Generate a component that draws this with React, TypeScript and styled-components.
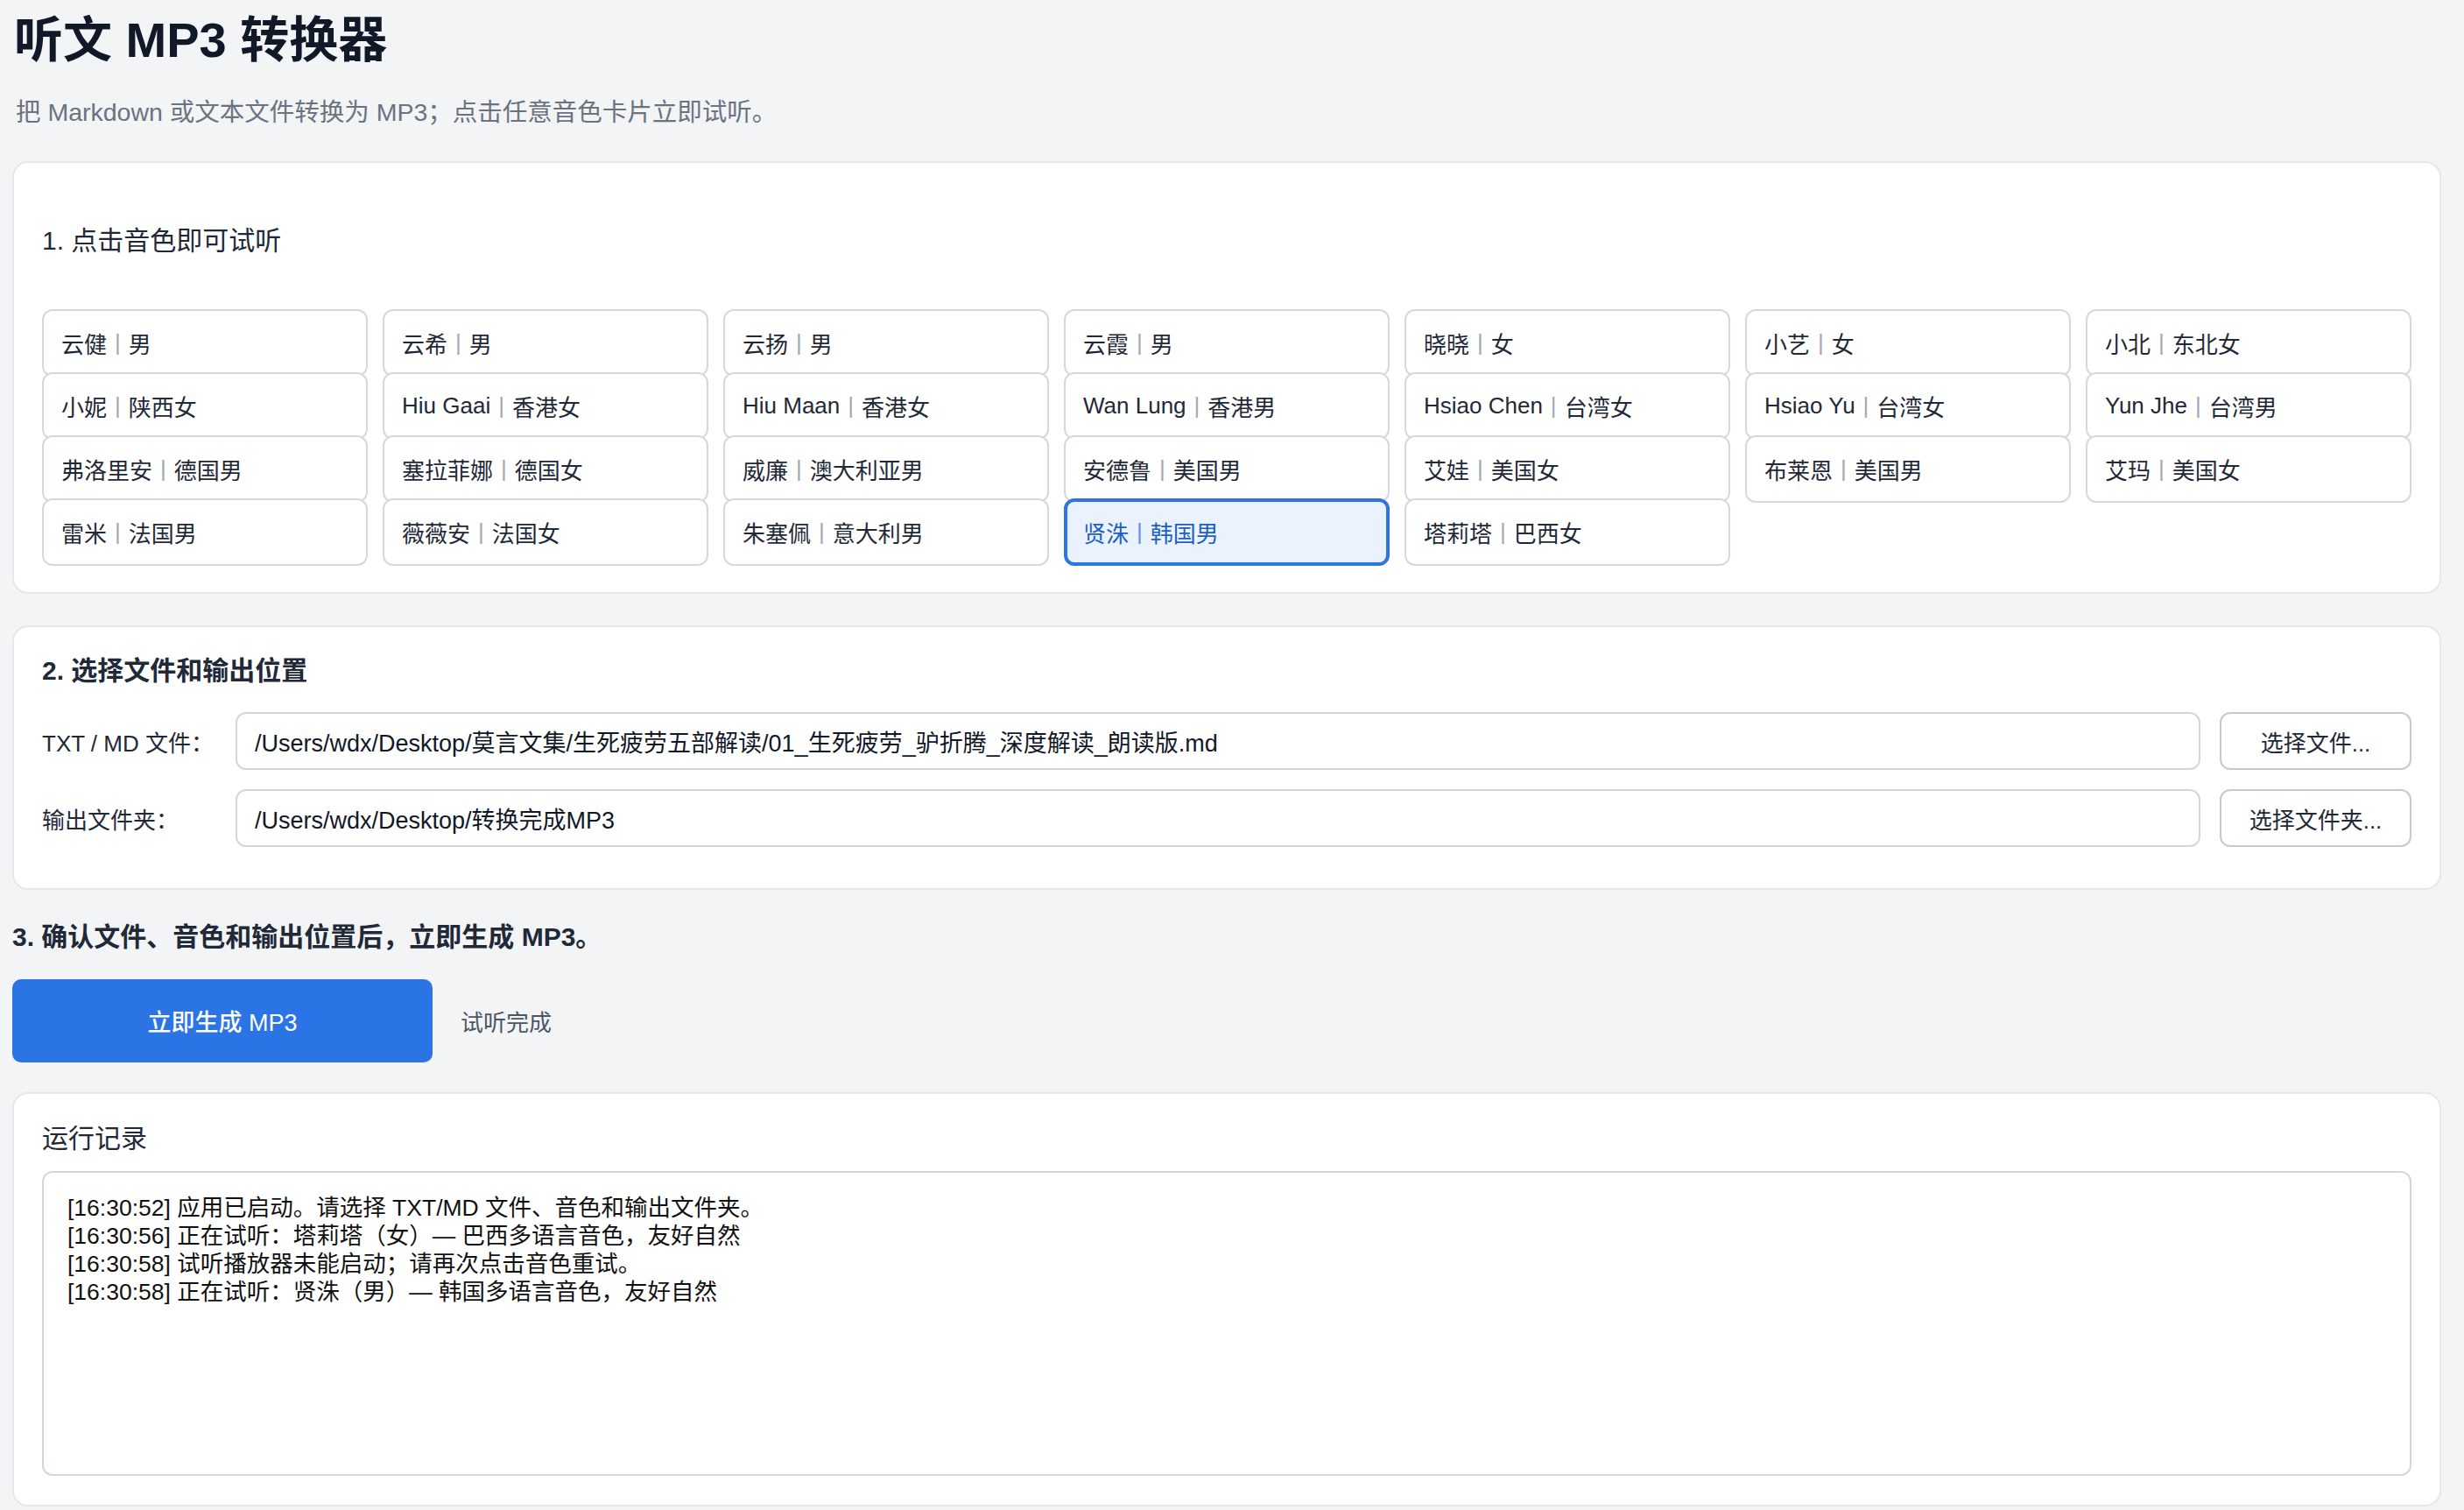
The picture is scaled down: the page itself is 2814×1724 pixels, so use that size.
import React, { useState } from "react";
import styled, { createGlobalStyle } from "styled-components";

const GlobalStyle = createGlobalStyle`
  html, body {
    margin: 0;
    padding: 0;
    background: #f3f4f6;
  }
  body {
    font-family: "Liberation Sans", "Noto Sans CJK SC", sans-serif;
    color: #1f2937;
  }
  * {
    box-sizing: border-box;
  }
`;

const Page = styled.div`
  padding: 12px 26px 0 14px;
`;

const Title = styled.h1`
  margin: 0;
  font-size: 56px;
  line-height: 67px;
  font-weight: 700;
  color: #111827;
  padding-left: 2px;
`;

const Subtitle = styled.p`
  margin: 28px 0 0 4px;
  font-size: 28.5px;
  line-height: 42px;
  color: #6b7280;
`;

const Card = styled.section<{ $pad: string; $top: number }>`
  margin-top: ${p => p.$top}px;
  background: #ffffff;
  border: 2px solid #e5e7eb;
  border-radius: 18px;
  padding: ${p => p.$pad};
`;

const Heading = styled.h2<{ $weight?: number }>`
  margin: 0;
  font-size: 30px;
  line-height: 42px;
  font-weight: ${p => p.$weight || 400};
  color: #1f2937;
`;

const VoiceGrid = styled.div`
  margin-top: 57px;
  display: grid;
  grid-template-columns: repeat(7, 1fr);
  column-gap: 17px;
  grid-auto-rows: 72px;
`;

const VoiceCard = styled.button<{ $active?: boolean }>`
  height: 77px;
  display: flex;
  align-items: center;
  text-align: left;
  font-family: inherit;
  font-size: 26px;
  cursor: pointer;
  border-radius: 12px;
  background: ${p => (p.$active ? "#eaf2fe" : "#ffffff")};
  border: ${p => (p.$active ? "4px solid #2f74e4" : "2px solid #d5d8de")};
  color: ${p => (p.$active ? "#1d5fc4" : "#1f2937")};
  padding: ${p => (p.$active ? "0 18px" : "0 20px")};
`;

const Bar = styled.span<{ $active?: boolean }>`
  color: ${p => (p.$active ? "#5b8fe0" : "#a3a8b0")};
  margin: 0 9px;
  font-weight: 300;
`;

const FileRow = styled.div<{ $top: number }>`
  margin-top: ${p => p.$top}px;
  display: grid;
  grid-template-columns: 199px 1fr 219px;
  column-gap: 22px;
  align-items: center;
`;

const Label = styled.label`
  font-size: 26px;
  color: #1f2937;
`;

const PathInput = styled.input`
  height: 66px;
  width: 100%;
  border: 2px solid #d3d6dc;
  border-radius: 12px;
  padding: 0 20px;
  font-family: inherit;
  font-size: 27px;
  color: #111827;
  background: #ffffff;
  outline: none;
`;

const PickButton = styled.button`
  height: 66px;
  border: 2px solid #c6cad0;
  border-radius: 12px;
  background: #ffffff;
  font-family: inherit;
  font-size: 26px;
  color: #1f2937;
  cursor: pointer;
`;

const StepTitle = styled.h2`
  margin: 33px 0 0 0;
  font-size: 30px;
  line-height: 42px;
  font-weight: 600;
  color: #1f2937;
`;

const ActionRow = styled.div`
  margin-top: 27px;
  display: flex;
  align-items: center;
  gap: 32px;
`;

const GenerateButton = styled.button`
  width: 480px;
  height: 95px;
  border: none;
  border-radius: 10px;
  background: #2b74e6;
  color: #ffffff;
  font-family: inherit;
  font-size: 27px;
  font-weight: 500;
  cursor: pointer;
`;

const Status = styled.span`
  font-size: 26px;
  color: #4b5563;
`;

const LogBox = styled.div`
  margin-top: 16px;
  height: 348px;
  border: 2px solid #d3d6dc;
  border-radius: 12px;
  padding: 24px 27px;
  font-size: 26.5px;
  line-height: 32px;
  color: #111111;
  overflow: auto;
`;

const voices = [
  ["云健", "男"], ["云希", "男"], ["云扬", "男"], ["云霞", "男"], ["晓晓", "女"], ["小艺", "女"], ["小北", "东北女"],
  ["小妮", "陕西女"], ["Hiu Gaai", "香港女"], ["Hiu Maan", "香港女"], ["Wan Lung", "香港男"], ["Hsiao Chen", "台湾女"], ["Hsiao Yu", "台湾女"], ["Yun Jhe", "台湾男"],
  ["弗洛里安", "德国男"], ["塞拉菲娜", "德国女"], ["威廉", "澳大利亚男"], ["安德鲁", "美国男"], ["艾娃", "美国女"], ["布莱恩", "美国男"], ["艾玛", "美国女"],
  ["雷米", "法国男"], ["薇薇安", "法国女"], ["朱塞佩", "意大利男"], ["贤洙", "韩国男"], ["塔莉塔", "巴西女"]
];

const logs = [
  "[16:30:52] 应用已启动。请选择 TXT/MD 文件、音色和输出文件夹。",
  "[16:30:56] 正在试听：塔莉塔（女）— 巴西多语言音色，友好自然",
  "[16:30:58] 试听播放器未能启动；请再次点击音色重试。",
  "[16:30:58] 正在试听：贤洙（男）— 韩国多语言音色，友好自然"
];

const App: React.FunctionComponent = () => {
  const [selected, setSelected] = useState<number>(24);

  return (
    <>
      <GlobalStyle />
      <Page>
        <Title>听文 MP3 转换器</Title>
        <Subtitle>把 Markdown 或文本文件转换为 MP3；点击任意音色卡片立即试听。</Subtitle>

        <Card $top={35} $pad="68px 32px 35px 32px">
          <Heading>1. 点击音色即可试听</Heading>
          <VoiceGrid>
            {voices.map(([name, desc], i) => (
              <VoiceCard key={name + i} $active={i === selected} onClick={() => setSelected(i)}>
                {name}
                <Bar $active={i === selected}>|</Bar>
                {desc}
              </VoiceCard>
            ))}
          </VoiceGrid>
        </Card>

        <Card $top={36} $pad="29px 32px 47px 32px">
          <Heading $weight={600}>2. 选择文件和输出位置</Heading>
          <FileRow $top={26}>
            <Label>TXT / MD 文件：</Label>
            <PathInput readOnly value="/Users/wdx/Desktop/莫言文集/生死疲劳五部解读/01_生死疲劳_驴折腾_深度解读_朗读版.md" />
            <PickButton>选择文件...</PickButton>
          </FileRow>
          <FileRow $top={22}>
            <Label>输出文件夹：</Label>
            <PathInput readOnly value="/Users/wdx/Desktop/转换完成MP3" />
            <PickButton>选择文件夹...</PickButton>
          </FileRow>
        </Card>

        <StepTitle>3. 确认文件、音色和输出位置后，立即生成 MP3。</StepTitle>
        <ActionRow>
          <GenerateButton>立即生成 MP3</GenerateButton>
          <Status>试听完成</Status>
        </ActionRow>

        <Card $top={34} $pad="30px 32px 33px 32px">
          <Heading>运行记录</Heading>
          <LogBox>
            {logs.map((line, i) => (
              <div key={i}>{line}</div>
            ))}
          </LogBox>
        </Card>
      </Page>
    </>
  );
};

export default App;
